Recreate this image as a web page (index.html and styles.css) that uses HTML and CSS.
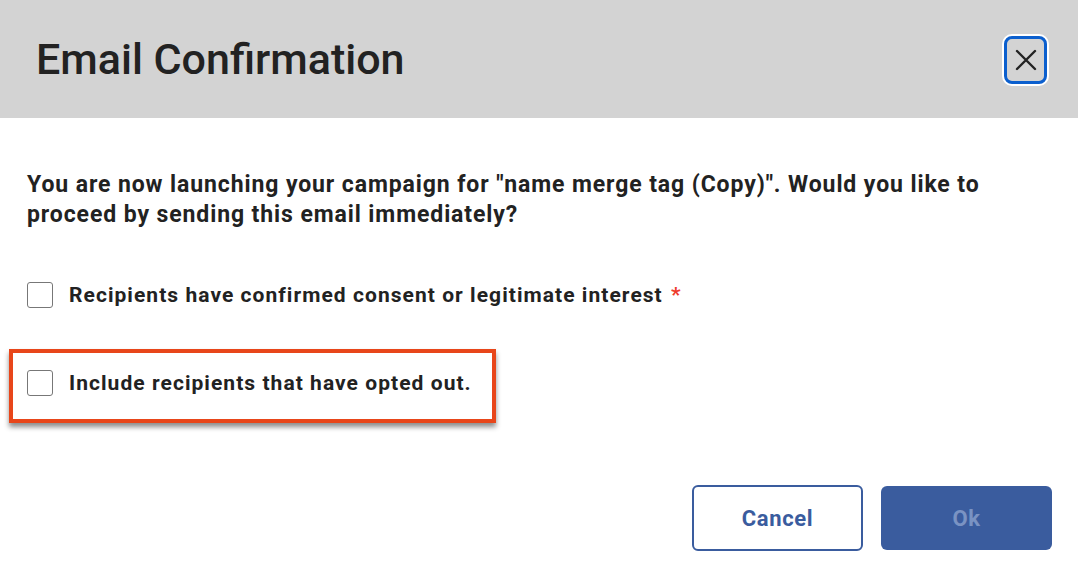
FILE: index.html
```html
<!DOCTYPE html>
<html lang="en">
<head>
  <meta charset="UTF-8">
  <title>Email Confirmation</title>
  <meta name="viewport" content="width=device-width, initial-scale=1">
  <link rel="stylesheet" href="styles.css">
</head>
<body>
  <div class="dialog" role="dialog" aria-labelledby="dlgTitle">
    <header class="dialog-head">
      <h1 id="dlgTitle">Email Confirmation</h1>
      <button class="close-btn" type="button" aria-label="Close">
        <svg width="22" height="22" viewBox="0 0 22 22">
          <path d="M2 2 L20 20 M20 2 L2 20" stroke="#222" stroke-width="2.4" stroke-linecap="round" fill="none"/>
        </svg>
      </button>
    </header>
    <div class="dialog-body">
      <p class="lead">You are now launching your campaign for "name merge tag (Copy)". Would you like to proceed by sending this email immediately?</p>
      <label class="check-row">
        <span class="box"></span>
        <span>Recipients have confirmed consent or legitimate interest <span class="req">*</span></span>
      </label>
      <label class="check-row marked">
        <span class="box"></span>
        <span>Include recipients that have opted out.</span>
      </label>
    </div>
    <footer class="dialog-foot">
      <button class="btn btn-outline" type="button">Cancel</button>
      <button class="btn btn-primary" type="button" disabled>Ok</button>
    </footer>
  </div>
</body>
</html>
```

FILE: styles.css
```css
:root {
  --head-bg: #d3d3d3;
  --text: #222;
  --blue: #3a5c9e;
  --focus: #0b5fce;
  --orange: #e8461a;
}
html, body {
  margin: 0;
  padding: 0;
  background: #fff;
}
body {
  font-family: Roboto, 'Liberation Sans', Arial, sans-serif;
  color: var(--text);
}
.dialog {
  width: 1078px;
  height: 578px;
  display: flex;
  flex-direction: column;
  background: #fff;
}
.dialog-head {
  height: 118px;
  background: var(--head-bg);
  display: flex;
  align-items: center;
  justify-content: space-between;
  padding: 0 31px 0 36px;
  box-sizing: border-box;
}
.dialog-head h1 {
  margin: 0;
  font-size: 43px;
  font-weight: 500;
  color: var(--text);
}
.close-btn {
  width: 43px;
  height: 48px;
  margin-top: 2px;
  background: var(--head-bg);
  border: 3px solid var(--focus);
  border-radius: 8px;
  box-shadow: 0 0 0 2px #fff;
  display: flex;
  align-items: center;
  justify-content: center;
  padding: 0;
  cursor: pointer;
}
.dialog-body {
  flex: 1;
  padding: 52px 27px 0 27px;
  display: flex;
  flex-direction: column;
  align-items: flex-start;
}
.lead {
  margin: 0 0 52px 0;
  font-size: 23px;
  line-height: 30px;
  font-weight: 700;
  letter-spacing: 0.9px;
}
.check-row {
  display: flex;
  align-items: center;
  gap: 16px;
  font-size: 21px;
  font-weight: 700;
  letter-spacing: 1.05px;
  cursor: pointer;
}
.check-row + .check-row {
  margin-top: 41px;
}
.box {
  width: 24px;
  height: 24px;
  border: 1.5px solid #777;
  border-radius: 3px;
  background: #fff;
  flex-shrink: 0;
}
.req {
  color: #ee3b2d;
  margin-left: 2px;
}
/* outlined row */
.check-row.marked {
  margin-left: -18px;
  padding: 17px 20px 23px 14px;
  border: 4px solid var(--orange);
  box-shadow: 0 4px 5px rgba(0,0,0,0.45);
}
.dialog-foot {
  display: flex;
  justify-content: flex-end;
  align-items: center;
  gap: 18px;
  padding: 0 26px 27px 0;
}
.btn {
  width: 171px;
  height: 66px;
  border-radius: 6px;
  font-family: inherit;
  font-size: 22px;
  font-weight: 700;
  letter-spacing: 0.6px;
  box-sizing: border-box;
  cursor: pointer;
}
.btn-outline {
  background: #fff;
  color: var(--blue);
  border: 2px solid var(--blue);
}
.btn-primary {
  background: var(--blue);
  color: #7a93c3;
  border: none;
  height: 64px;
}
```
